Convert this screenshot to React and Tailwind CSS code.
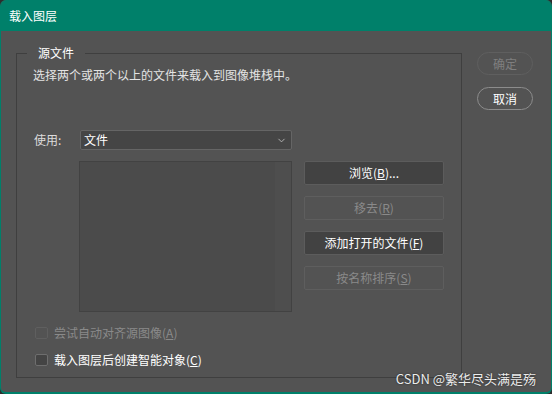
import { ChevronDown } from "lucide-react";

const font = { fontFamily: '"Noto Sans CJK SC", "Noto Sans", sans-serif' };

function SideButton({ label, mnemonic, tail = "", disabled = false }) {
  return (
    <div
      className={`flex h-[24px] w-[140px] items-center justify-center rounded-[2px] border text-[12px] ${
        disabled
          ? "border-[#5e5e5e] bg-[#535353] text-[#8a8a8a]"
          : "border-[#5c5c5c] bg-[#424242] text-white"
      }`}
    >
      {label}(<u>{mnemonic}</u>){tail}
    </div>
  );
}

function CheckRow({ label, mnemonic, disabled = false, className = "" }) {
  return (
    <div className={`flex h-[17px] items-center pl-[18px] ${className}`}>
      <span
        className={`h-[12px] w-[13px] rounded-[2px] border ${
          disabled ? "border-[#5f5f5f] bg-[#535353]" : "border-[#6e6e6e] bg-[#444444]"
        }`}
      />
      <span
        className={`ml-[6px] text-[12px] leading-[17px] ${
          disabled ? "text-[#8a8a8a]" : "text-white"
        }`}
      >
        {label}(<u>{mnemonic}</u>)
      </span>
    </div>
  );
}

export default function App() {
  return (
    <div className="relative h-[394px] w-[552px] bg-[#2d2d2d]" style={font}>
      <div className="flex h-full flex-col overflow-hidden rounded-[6px] border-x border-b-2 border-[#00806a] bg-[#535353]">
        {/* title bar */}
        <div className="flex h-[31px] shrink-0 items-center bg-[#00806a] pl-[8px] text-[12px] text-white">
          载入图层
        </div>

        <div className="flex flex-1 pl-[15px]">
          {/* source files group */}
          <fieldset className="mt-[13px] h-[334px] w-[446px] border border-[#3f3f3f] p-0">
            <legend className="ml-[10px] h-[18px] px-[11px] text-[12px] leading-[18px] text-white">
              源文件
            </legend>
            <div className="mt-[5px] h-[16px] pl-[16px] text-[12px] leading-[16px] text-[#e4e4e4]">
              选择两个或两个以上的文件来载入到图像堆栈中。
            </div>

            <div className="mt-[47px] flex h-[20px] items-center">
              <span className="w-[63px] pl-[17px] text-[12px] text-[#dcdcdc]">使用:</span>
              <div className="flex h-[20px] w-[212px] items-center justify-between rounded-[2px] border border-[#656565] bg-[#454545] pl-[3px] pr-[4px] text-[12px] text-white">
                <span>文件</span>
                <ChevronDown size={11} strokeWidth={2} className="text-[#b8b8b8]" />
              </div>
            </div>

            <div className="mt-[11px] flex pl-[62px]">
              <div className="flex h-[151px] w-[213px] border border-[#424242] bg-[#4b4b4b]">
                <div className="flex-1" />
                <div className="w-[16px] bg-[#4e4e4e]" />
              </div>
              <div className="ml-[12px] flex flex-col gap-[11px]">
                <SideButton label="浏览" mnemonic="B" tail="..." />
                <SideButton label="移去" mnemonic="R" disabled />
                <SideButton label="添加打开的文件" mnemonic="F" />
                <SideButton label="按名称排序" mnemonic="S" disabled />
              </div>
            </div>

            <CheckRow className="mt-[12px]" label="尝试自动对齐源图像" mnemonic="A" disabled />
            <CheckRow className="mt-[10px]" label="载入图层后创建智能对象" mnemonic="C" />
          </fieldset>

          {/* dialog buttons */}
          <div className="ml-[15px] mt-[21px] flex flex-col gap-[12px]">
            <div className="flex h-[23px] w-[56px] items-center justify-center rounded-full border border-[#5f5f5f] text-[12px] text-[#7f7f7f]">
              确定
            </div>
            <div className="flex h-[23px] w-[56px] items-center justify-center rounded-full border-[1.5px] border-[#8c8c8c] text-[12px] text-white">
              取消
            </div>
          </div>
        </div>
      </div>

      <div className="absolute bottom-[7px] right-[16px] text-[13px] leading-[16px] text-[#ececec] [text-shadow:0_0_2px_rgba(0,0,0,0.6)]">
        CSDN @繁华尽头满是殇
      </div>
    </div>
  );
}
